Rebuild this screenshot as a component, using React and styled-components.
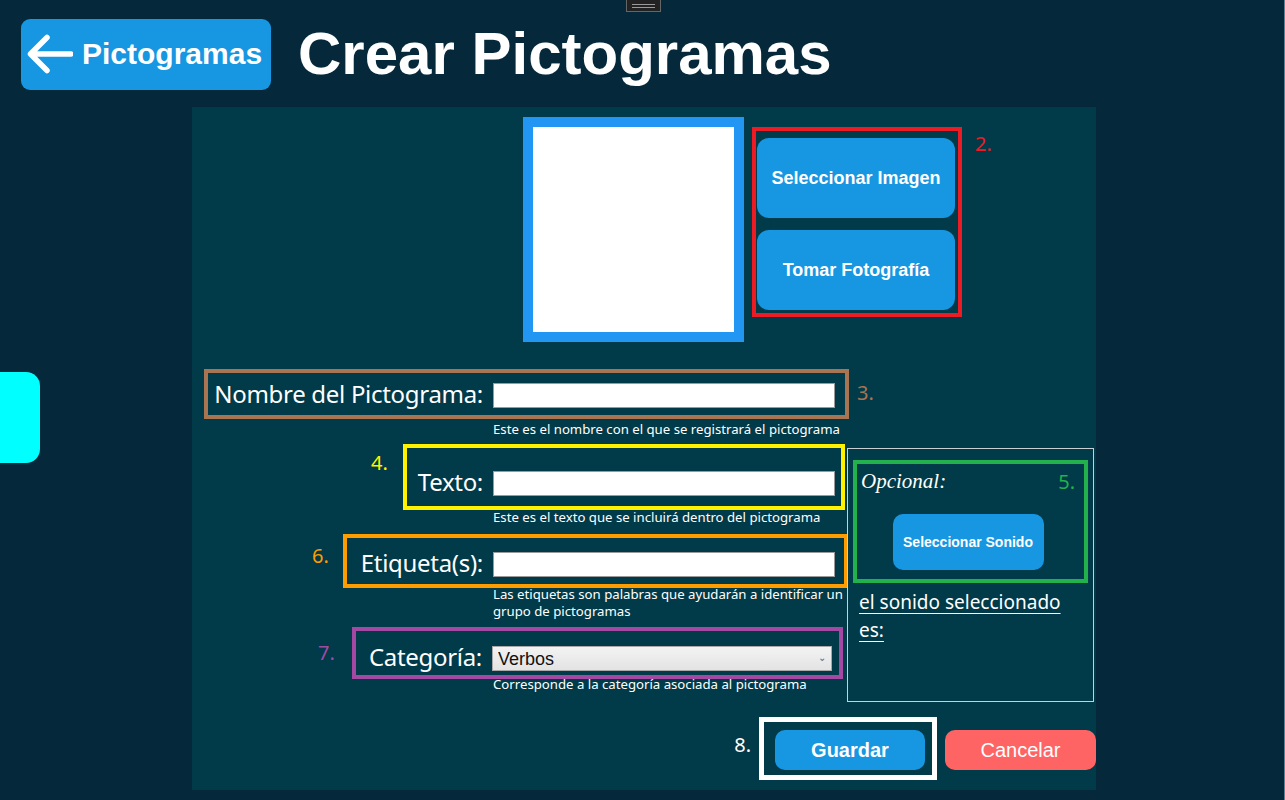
import React from "react"
import styled, { createGlobalStyle } from "styled-components"

const GlobalStyle = createGlobalStyle`
  html, body {
    margin: 0;
    padding: 0;
    background: #05293b;
    overflow: hidden;
  }
  * {
    box-sizing: border-box;
  }
`

const Page = styled.div`
  position: relative;
  width: 1285px;
  height: 800px;
  background: #05293b;
  border-right: 1px solid #5f8197;
  font-family: "Noto Sans", "Open Sans", sans-serif;
  color: #fff;
`

const Handle = styled.div`
  position: absolute;
  top: 0;
  left: 626px;
  width: 35px;
  height: 12px;
  background: #222;
  border: 1px solid #666;
  border-top: none;
  display: flex;
  flex-direction: column;
  justify-content: center;
  gap: 2px;
  padding: 0 5px;

  span {
    display: block;
    height: 1px;
    background: #9a9a9a;
  }
`

const SideTab = styled.div`
  position: absolute;
  left: 0;
  top: 372px;
  width: 40px;
  height: 91px;
  background: #00ffff;
  border-radius: 0 14px 14px 0;
`

const Header = styled.header`
  display: flex;
  align-items: center;
  gap: 27px;
  height: 107px;
  padding: 0 0 0 21px;
`

const BackButton = styled.button`
  display: flex;
  align-items: center;
  gap: 9px;
  height: 71px;
  width: 250px;
  margin-top: 1px;
  padding: 0 0 0 6px;
  border: none;
  border-radius: 9px;
  background: #1796e2;
  color: #fff;
  font-family: "Liberation Sans", Arial, sans-serif;
  font-weight: bold;
  font-size: 30px;
`

const Title = styled.h1`
  margin: 0;
  font-family: "Liberation Sans", Arial, sans-serif;
  font-weight: bold;
  font-size: 60px;
  color: #fff;
`

const Panel = styled.main`
  width: 904px;
  height: 683px;
  margin-left: 192px;
  padding-top: 10px;
  background: #013a48;
`

const TopRow = styled.div`
  display: flex;
  align-items: flex-start;
  padding-left: 331px;
  height: 252px;
`

const ImageFrame = styled.div`
  width: 221px;
  height: 225px;
  border: 10px solid #2196f3;
  background: #fff;
`

const ButtonGroup = styled.div`
  display: flex;
  flex-direction: column;
  gap: 12px;
  width: 210px;
  height: 190px;
  margin: 10px 0 0 8px;
  padding: 7px 3px 3px 1px;
  border: 4px solid #ed1c24;
`

const BlueButton = styled.button`
  width: ${(p) => p.$w || "100%"};
  height: ${(p) => p.$h || "80px"};
  border: none;
  border-radius: ${(p) => p.$r || "12px"};
  background: #1796e2;
  color: #fff;
  font-family: "Liberation Sans", Arial, sans-serif;
  font-weight: bold;
  font-size: ${(p) => p.$size || "18px"};
`

const Num = styled.span`
  font-size: 20px;
  line-height: 27px;
  color: ${(p) => p.$color};
  margin: ${(p) => p.$m || "0"};
`

const FormGrid = styled.div`
  display: grid;
  grid-template-columns: 655px 249px;
`

const FullRow = styled.div`
  grid-column: 1 / -1;
  display: flex;
  align-items: flex-start;
`

const RowSlot = styled.div`
  width: 657px;
  display: flex;
  justify-content: flex-end;
`

const LeftCol = styled.div`
  display: flex;
  flex-direction: column;
`

const FieldRow = styled.div`
  display: flex;
  justify-content: flex-end;
  align-items: flex-start;
  margin-right: ${(p) => p.$mr || "0"};
  margin-top: ${(p) => p.$mt || "0"};
`

const FieldBox = styled.div`
  display: flex;
  align-items: center;
  gap: 10px;
  border: 4px solid ${(p) => p.$color};
  padding: ${(p) => p.$pad};
`

const Label = styled.label`
  margin-top: -4px;
  font-size: 24px;
  line-height: 25px;
  letter-spacing: -0.3px;
  white-space: nowrap;
`

const TextInput = styled.input`
  width: 342px;
  height: 25px;
  border: 1px solid #9a9a9a;
  background: #fff;
`

const SelectWrap = styled.span`
  position: relative;
  display: block;
`

const Select = styled.select`
  appearance: none;
  display: block;
  width: 340px;
  height: 25px;
  padding: 0 0 0 5px;
  border: 1px solid #a8a8a8;
  background: linear-gradient(#f3f3f3, #e3e3e3);
  color: #111;
  font-family: "Liberation Sans", Arial, sans-serif;
  font-size: 18px;
`

const Chevron = styled.span`
  position: absolute;
  right: 6px;
  top: 4px;
  font-size: 10px;
  color: #666;
  pointer-events: none;
`

const Help = styled.p`
  margin: ${(p) => p.$m || "0"};
  padding-left: 301px;
  width: ${(p) => p.$w || "auto"};
  font-size: 13.2px;
  line-height: ${(p) => p.$lh || "16px"};
  color: #fff;
`

const SoundBox = styled.div`
  width: 247px;
  height: 254px;
  margin: 11px 0 0 0;
  border: 1px solid #c8d0d4;
  padding: 11px 5px 0 5px;
`

const GreenBox = styled.div`
  display: flex;
  flex-direction: column;
  align-items: center;
  border: 4px solid #22b14c;
  padding: 4px 9px 9px 4px;
`

const GreenHead = styled.div`
  display: flex;
  justify-content: space-between;
  align-self: stretch;
  margin-bottom: 19px;
`

const Optional = styled.span`
  font-family: "Liberation Serif", "Times New Roman", serif;
  font-style: italic;
  font-size: 21px;
  line-height: 27px;
`

const SoundText = styled.p`
  margin: 5px 0 0 6px;
  max-width: 218px;
  font-size: 19px;
  line-height: 28px;
  text-decoration: underline;
  text-underline-offset: 4px;
  color: #fff;
`

const Footer = styled.div`
  display: flex;
  justify-content: flex-end;
  align-items: flex-start;
  margin-top: 15px;
  gap: 8px;
`

const SaveFrame = styled.div`
  width: 178px;
  height: 63px;
  border: 5px solid #fff;
  padding: 8px 7px 5px 11px;
`

const CancelButton = styled.button`
  width: 151px;
  height: 40px;
  margin-top: 13px;
  border: none;
  border-radius: 10px;
  background: #ff6464;
  color: #fff;
  font-family: "Liberation Sans", Arial, sans-serif;
  font-size: 20px;
`

const ArrowLeft = () => (
  <svg width="46" height="40" viewBox="0 0 46 40" fill="none">
    <path
      d="M44 20 H4 M20 3.5 L3.5 20 L20 36.5"
      stroke="#fff"
      strokeWidth="5.5"
      strokeLinecap="round"
      strokeLinejoin="round"
    />
  </svg>
)

export default function App() {
  return (
    <Page>
      <GlobalStyle />
      <Handle>
        <span />
        <span />
      </Handle>
      <SideTab />
      <Header>
        <BackButton>
          <ArrowLeft />
          Pictogramas
        </BackButton>
        <Title>Crear Pictogramas</Title>
      </Header>

      <Panel>
        <TopRow>
          <ImageFrame />
          <ButtonGroup>
            <BlueButton>Seleccionar Imagen</BlueButton>
            <BlueButton>Tomar Fotografía</BlueButton>
          </ButtonGroup>
          <Num $color="#ed1c24" $m="13px 0 0 13px">2.</Num>
        </TopRow>

        <FormGrid>
          <FullRow>
            <RowSlot>
              <FieldBox $color="#a97452" $pad="10px 10px 7px 6px">
                <Label>Nombre del Pictograma:</Label>
                <TextInput />
              </FieldBox>
            </RowSlot>
            <Num $color="#a97452" $m="10px 0 0 8px">3.</Num>
          </FullRow>
          <FullRow>
            <Help $m="2px 0 0">Este es el nombre con el que se registrará el pictograma</Help>
          </FullRow>

          <LeftCol>
            <FieldRow $mr="2px" $mt="7px">
              <Num $color="#fff200" $m="5px 15px 0 0">4.</Num>
              <FieldBox $color="#fff200" $pad="23px 6px 10px 11px">
                <Label>Texto:</Label>
                <TextInput />
              </FieldBox>
            </FieldRow>
            <Help $m="-1px 0 0">Este es el texto que se incluirá dentro del pictograma</Help>

            <FieldRow $mr="-1px" $mt="9px">
              <Num $color="#ff9c00" $m="8px 14px 0 0">6.</Num>
              <FieldBox $color="#ff9c00" $pad="14px 9px 7px 14px">
                <Label>Etiqueta(s):</Label>
                <TextInput />
              </FieldBox>
            </FieldRow>
            <Help $m="-2px 0 0" $w="656px" $lh="17px">
              Las etiquetas son palabras que ayudarán a identificar un grupo de pictogramas
            </Help>

            <FieldRow $mr="4px" $mt="7px">
              <Num $color="#a349a4" $m="12px 17px 0 0">7.</Num>
              <FieldBox $color="#a349a4" $pad="15px 7px 4px 13px">
                <Label>Categoría:</Label>
                <SelectWrap>
                  <Select defaultValue="Verbos">
                    <option>Verbos</option>
                    <option>Sustantivos</option>
                    <option>Adjetivos</option>
                  </Select>
                  <Chevron>⌄</Chevron>
                </SelectWrap>
              </FieldBox>
            </FieldRow>
            <Help $m="-3px 0 0">Corresponde a la categoría asociada al pictograma</Help>
          </LeftCol>

          <SoundBox>
            <GreenBox>
              <GreenHead>
                <Optional>Opcional:</Optional>
                <Num $color="#22b14c">5.</Num>
              </GreenHead>
              <BlueButton $w="151px" $h="56px" $r="10px" $size="14px">
                Seleccionar Sonido
              </BlueButton>
            </GreenBox>
            <SoundText>el sonido seleccionado es:</SoundText>
          </SoundBox>
        </FormGrid>

        <Footer>
          <Num $color="#fff" $m="14px 0 0">8.</Num>
          <SaveFrame>
            <BlueButton $h="40px" $r="10px" $size="20px">Guardar</BlueButton>
          </SaveFrame>
          <CancelButton>Cancelar</CancelButton>
        </Footer>
      </Panel>
    </Page>
  )
}
